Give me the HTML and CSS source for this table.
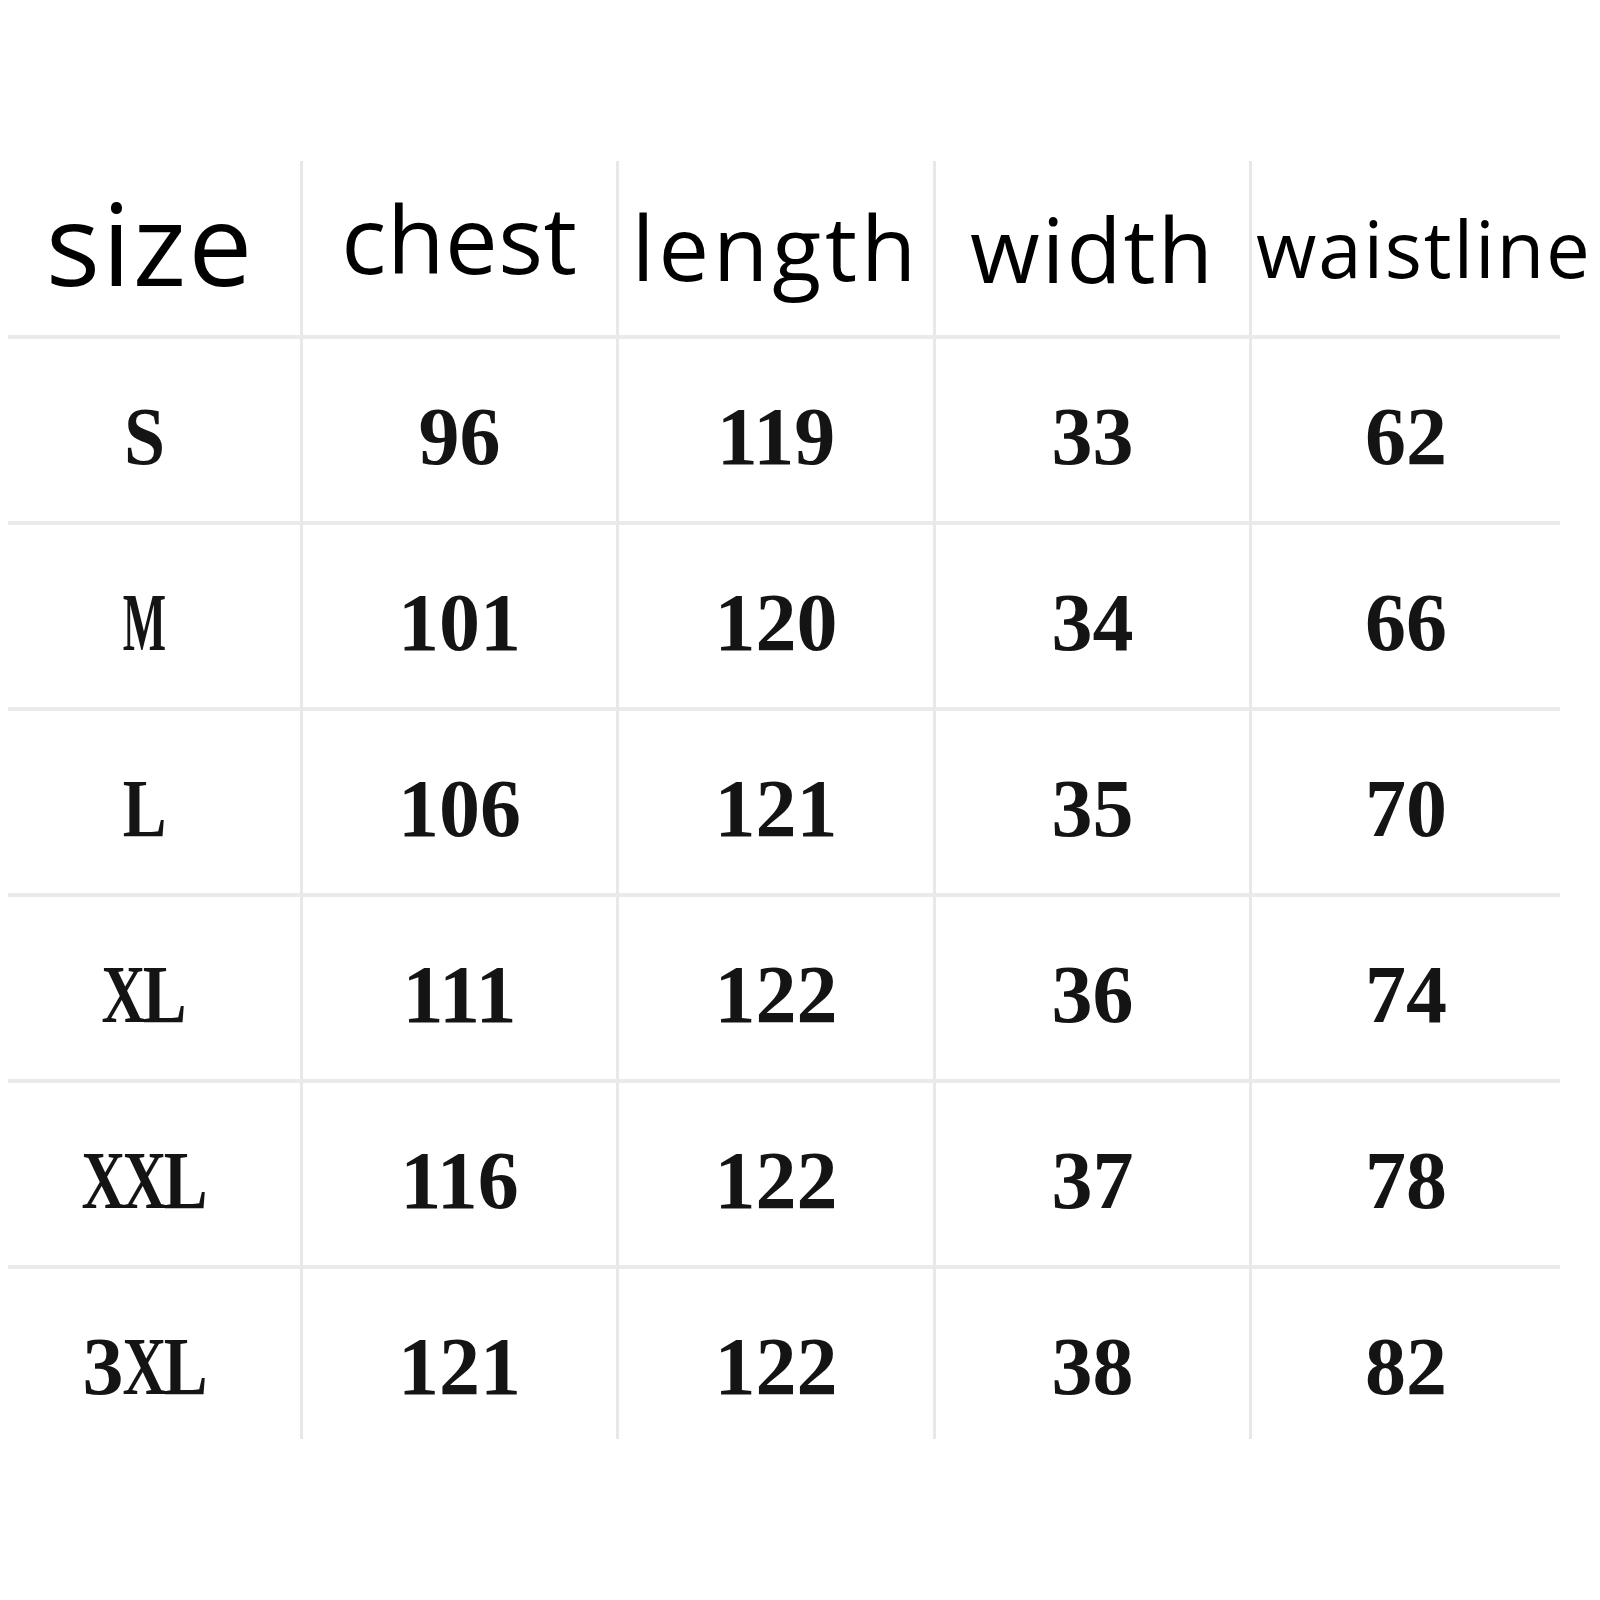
FILE: index.html
```html
<!DOCTYPE html>
<html lang="en">
<head>
<meta charset="utf-8">
<title>Size chart</title>
<link rel="stylesheet" href="styles.css">
</head>
<body>
<div class="chart">
  <div class="cell head c1 h-size">size</div>
  <div class="cell head h-chest">chest</div>
  <div class="cell head h-length">length</div>
  <div class="cell head h-width">width</div>
  <div class="cell head last h-waist">waistline</div>

  <div class="cell c1"><span class="ch s">S</span></div><div class="cell">96</div><div class="cell">119</div><div class="cell">33</div><div class="cell last">62</div>
  <div class="cell c1"><span class="ch m">M</span></div><div class="cell">101</div><div class="cell">120</div><div class="cell">34</div><div class="cell last">66</div>
  <div class="cell c1"><span class="ch l">L</span></div><div class="cell">106</div><div class="cell">121</div><div class="cell">35</div><div class="cell last">70</div>
  <div class="cell c1"><span class="ch x">X</span><span class="ch l">L</span></div><div class="cell">111</div><div class="cell">122</div><div class="cell">36</div><div class="cell last">74</div>
  <div class="cell c1"><span class="ch x">X</span><span class="ch x">X</span><span class="ch l">L</span></div><div class="cell">116</div><div class="cell">122</div><div class="cell">37</div><div class="cell last">78</div>
  <div class="cell c1 bottom"><span class="ch">3</span><span class="ch x">X</span><span class="ch l">L</span></div><div class="cell bottom">121</div><div class="cell bottom">122</div><div class="cell bottom">38</div><div class="cell last bottom">82</div>
</div>
</body>
</html>
```

FILE: styles.css
```css
html, body {
  margin: 0;
  padding: 0;
  background: #ffffff;
}

.chart {
  margin: 161px 0 0 8px;
  width: 1552px;
  display: grid;
  grid-template-columns: 295px 316px 317px 316px 308px;
  grid-template-rows: 178px repeat(5, 186px) 170px;
}

.cell {
  display: flex;
  align-items: center;
  justify-content: center;
  border-right: 3px solid #e8e8e8;
  border-bottom: 4px solid #eaeaea;
  font-family: "Liberation Serif", "Times New Roman", serif;
  font-weight: bold;
  font-size: 82px;
  color: #141414;
  padding-top: 14px;
  box-sizing: border-box;
  white-space: nowrap;
}

.cell.c1 {
  padding-right: 20px;
}

.cell.last {
  border-right: none;
}

.cell.bottom {
  border-bottom: none;
  padding-top: 26px;
}

.ch {
  display: inline-flex;
  justify-content: center;
  width: 0.5em;
}

.ch.s { transform: scaleX(0.9); }
.ch.m { transform: scaleX(0.56); }
.ch.l { transform: scaleX(0.8); }
.ch.x { transform: scaleX(0.74); }

.cell.head {
  font-family: "Open Sans", "Noto Sans", sans-serif;
  font-weight: normal;
  color: #000000;
  padding-top: 0;
}

.h-size {
  font-size: 114px;
  letter-spacing: 2px;
  padding-bottom: 14px;
  padding-left: 12px;
}

.h-chest {
  font-size: 94px;
  letter-spacing: 0.5px;
  padding-bottom: 20px;
}

.h-length {
  font-size: 90px;
  letter-spacing: 4px;
  padding-bottom: 4px;
}

.h-width {
  font-size: 90px;
  letter-spacing: 2px;
  padding-top: 6px;
}

.h-waist {
  font-size: 78px;
  letter-spacing: 1.8px;
  justify-content: flex-start;
  padding-left: 4px;
  padding-top: 6px;
}
```
